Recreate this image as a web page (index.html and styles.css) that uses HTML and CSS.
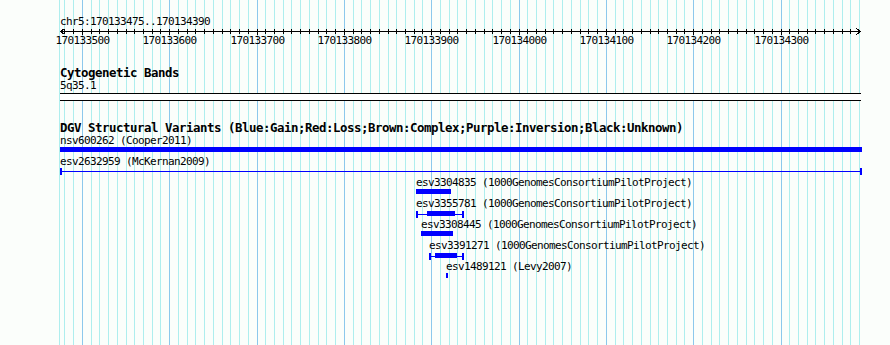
FILE: index.html
```html
<!DOCTYPE html>
<html lang="en">
<head>
  <meta charset="UTF-8" />
  <title>chr5:170133475..170134390</title>
  <link rel="stylesheet" href="styles.css">
</head>
<body>

<div class="browser">
  <!-- ===== Grid (drawn by script.js) ===== -->
  <svg class="grid" id="grid" width="890" height="345"></svg>

  <div class="tracks">
    <!-- ===== Ruler ===== -->
    <section class="track ruler-track">
      <div class="seg-label">chr5:170133475..170134390</div>
      <svg class="ruler" id="ruler" width="890" height="18"></svg>
    </section>

    <!-- ===== Cytogenetic Bands ===== -->
    <section class="track cyto-track">
      <h2 class="track-key">Cytogenetic Bands</h2>
      <div class="feat-label">5q35.1</div>
      <div class="band"></div>
    </section>

    <!-- ===== DGV ===== -->
    <section class="track dgv-track">
      <h2 class="track-key">DGV Structural Variants (Blue:Gain;Red:Loss;Brown:Complex;Purple:Inversion;Black:Unknown)</h2>

      <div class="feature">
        <div class="feat-label">nsv600262 (Cooper2011)</div>
        <div class="bar" style="width:802px"></div>
      </div>
      <div class="feature">
        <div class="feat-label">esv2632959 (McKernan2009)</div>
        <div class="range" style="width:802px"></div>
      </div>
      <div class="feature" style="margin-left:356px">
        <div class="feat-label">esv3304835 (1000GenomesConsortiumPilotProject)</div>
        <div class="bar" style="width:35px"></div>
      </div>
      <div class="feature" style="margin-left:356px">
        <div class="feat-label">esv3355781 (1000GenomesConsortiumPilotProject)</div>
        <div class="range" style="width:48px"><i class="thick" style="margin-left:9px;width:28px"></i></div>
      </div>
      <div class="feature" style="margin-left:361px">
        <div class="feat-label">esv3308445 (1000GenomesConsortiumPilotProject)</div>
        <div class="bar" style="width:32px"></div>
      </div>
      <div class="feature" style="margin-left:369px">
        <div class="feat-label">esv3391271 (1000GenomesConsortiumPilotProject)</div>
        <div class="range" style="width:35px"><i class="thick" style="margin-left:4px;width:22px"></i></div>
      </div>
      <div class="feature" style="margin-left:386px">
        <div class="feat-label">esv1489121 (Levy2007)</div>
        <div class="bar" style="width:2px"></div>
      </div>
    </section>
  </div>
</div>

<script src="script.js"></script>
</body>
</html>
```

FILE: styles.css
```css
* { box-sizing:border-box; margin:0; padding:0; }
body {
  background:#fbfefb; color:#000;
  font-family:"DejaVu Sans Mono",monospace; font-size:11px; letter-spacing:-0.62px;
}

.browser{ position:relative; width:890px; height:345px; overflow:hidden; }
.grid{ position:absolute; top:0; left:0; }
.grid .minor{ fill:#aeeeee; }
.grid .major{ fill:#8cc8ec; }

.tracks{ position:relative; padding-top:15px; }
.track{ padding-left:60px; }
.seg-label,.feat-label{ height:13px; line-height:13px; white-space:nowrap; }

.ruler{ display:block; margin-left:-60px; }
.ruler rect,.ruler path{ shape-rendering:crispEdges; }
.ruler text{ font-family:"DejaVu Sans Mono",monospace; font-size:11px; letter-spacing:-0.62px; fill:#000; }

.track-key{
  height:13px; line-height:14px; font-size:12.4px; letter-spacing:-0.46px;
  font-weight:bold; white-space:nowrap;
}
.cyto-track{ margin-top:20px; }
.band{
  margin-top:1px; width:801px; height:8px; background:#fff;
  border-top:1px solid #000; border-bottom:1px solid #000;
}

.dgv-track{ margin-top:20px; }
.feature{ height:21px; }
.bar{ height:5px; background:#00f; }
.range{
  height:7px; border-left:2px solid #00f; border-right:2px solid #00f;
  background:linear-gradient(#00f,#00f) 0 3px/100% 1px no-repeat;
}
.range .thick{ display:block; height:5px; margin-top:1px; background:#00f; }
```

FILE: script.js
```js
/* ===== Scale ===== */
const START=170133475, END=170134390, PAD=60, WIDTH=800;
const scale=WIDTH/(END-START+1);
const xOf=bp=>Math.round(PAD+(bp-START)*scale);
const NS='http://www.w3.org/2000/svg';
const mk=(tag,attrs,text)=>{ const e=document.createElementNS(NS,tag); for(const k in attrs) e.setAttribute(k,attrs[k]); if(text) e.textContent=text; return e; };

/* ===== Grid ===== */
const grid=document.getElementById('grid');
grid.appendChild(mk('rect',{x:59,y:0,width:1,height:345,class:'minor'}));
for(let bp=Math.ceil(START/10)*10; bp<=END; bp+=10){
  grid.appendChild(mk('rect',{x:xOf(bp),y:0,width:1,height:345,class:bp%100===0?'major':'minor'}));
}

/* ===== Ruler ===== */
const ruler=document.getElementById('ruler');
ruler.appendChild(mk('rect',{x:PAD,y:3,width:WIDTH+1,height:1}));
ruler.appendChild(mk('path',{d:'M64.5 0.5 L60.5 3.5 L64.5 6.5',fill:'none',stroke:'#000'}));
ruler.appendChild(mk('path',{d:'M856.5 0.5 L860.5 3.5 L856.5 6.5',fill:'none',stroke:'#000'}));
for(let bp=Math.ceil(START/10)*10; bp<END; bp+=10){
  const x=xOf(bp), major=bp%100===0;
  ruler.appendChild(mk('rect',{x:x,y:1,width:1,height:major?6:5}));
  if(major) ruler.appendChild(mk('text',{x:x+0.5,y:16,'text-anchor':'middle'},String(bp)));
}
```
